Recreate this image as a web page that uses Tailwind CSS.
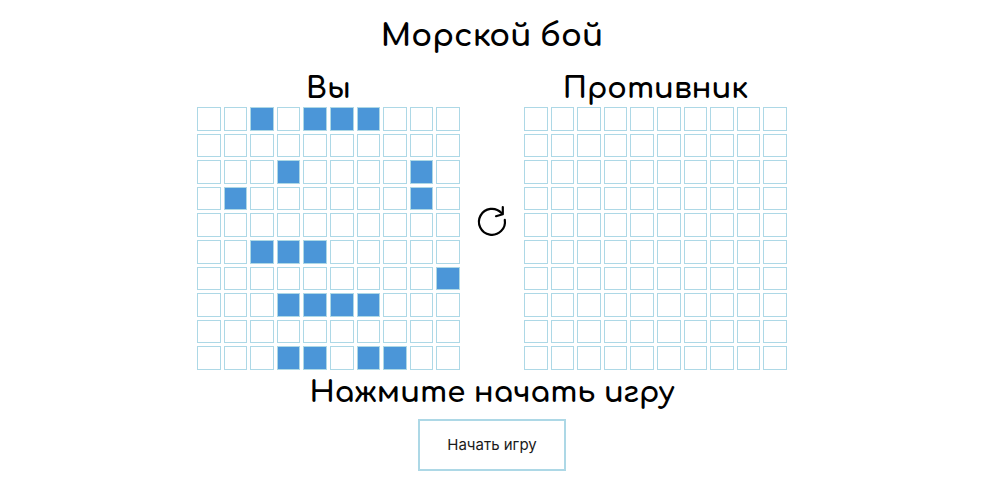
<!DOCTYPE html>
<html lang="ru">
<head>
<meta charset="utf-8">
<meta name="viewport" content="width=device-width, initial-scale=1">
<title>Морской бой</title>
<script src="https://cdn.jsdelivr.net/npm/@tailwindcss/browser@4"></script>
</head>
<body class="bg-white pr-4 font-['Comfortaa','Inter',sans-serif] text-black">
<main class="flex flex-col items-center pt-4">
  <h1 class="text-[31px] leading-10 font-bold">Морской бой</h1>
  <div class="mt-[15px] flex items-center">
    <section>
      <h2 class="text-center text-[29px] leading-9 font-bold">Вы</h2>
      <div id="own" class="grid w-[263px] grid-cols-10 gap-[3px]"></div>
    </section>
    <button type="button" aria-label="Расставить заново" class="flex w-16 justify-center">
      <svg class="size-8" viewBox="0 0 32 32" fill="none" stroke="#000" stroke-width="2.200" stroke-linecap="round" stroke-linejoin="round">
        <path d="M28.800 14.800A13 13 0 1 1 25.500 8"/>
        <path d="M26.800 2V9.200L20 11.200"/>
      </svg>
    </button>
    <section>
      <h2 class="text-center text-[29px] leading-9 font-bold">Противник</h2>
      <div id="enemy" class="grid w-[263px] grid-cols-10 gap-[3px]"></div>
    </section>
  </div>
  <h2 class="mt-[5px] text-center text-[29px] leading-9 font-bold">Нажмите начать игру</h2>
  <button type="button" class="mt-2 border-2 border-[#add8e6] px-[27px] py-3 font-['Inter',sans-serif] text-[15px] leading-6 text-[#1a1a1a]">Начать игру</button>
</main>
<script>
  const ships = ['0010111000', '0000000000', '0001000010', '0100000010', '0000000000',
                 '0011100000', '0000000001', '0001111000', '0000000000', '0001101100'];
  const own = document.getElementById('own');
  const enemy = document.getElementById('enemy');
  ships.forEach((row, y) => [...row].forEach((cell, x) => {
    const mine = document.createElement('div');
    mine.className = cell === '1'
      ? 'aspect-square border border-[#add8e6] bg-[#4b96d8]'
      : 'aspect-square border border-[#add8e6]';
    own.append(mine);
    const target = document.createElement('button');
    target.type = 'button';
    target.className = 'aspect-square border border-[#add8e6]';
    target.setAttribute('aria-label', `Ряд ${y + 1}, столбец ${x + 1}`);
    enemy.append(target);
  }));
</script>
</body>
</html>
